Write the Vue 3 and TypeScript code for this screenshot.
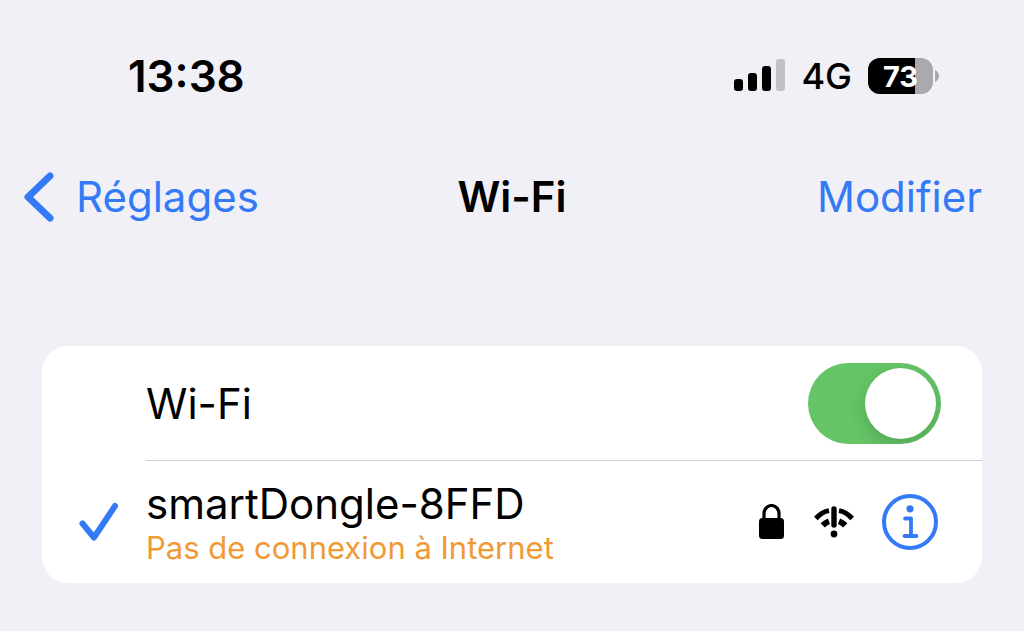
<script setup lang="ts">
import { ref } from 'vue'

interface Network {
  name: string
  status: string
}

const wifiOn = ref(true)
const batteryLevel = 73
const network: Network = {
  name: 'smartDongle-8FFD',
  status: 'Pas de connexion à Internet',
}
</script>

<template>
  <div class="screen">
    <header class="status-bar">
      <time class="clock">13:38</time>
      <div class="indicators">
        <svg class="signal" viewBox="0 0 51 34" aria-hidden="true">
          <rect x="0" y="20" width="9" height="12" rx="3" />
          <rect x="14" y="14" width="9" height="18" rx="3" />
          <rect x="28" y="7" width="9" height="25" rx="3" />
          <rect x="42" y="0" width="9" height="32" rx="3" fill="#c2c2c5" />
        </svg>
        <span class="carrier">4G</span>
        <div class="battery">
          <div class="battery-body">
            <div class="battery-fill" :style="{ width: batteryLevel + '%' }"></div>
            <span class="battery-text">{{ batteryLevel }}</span>
          </div>
          <svg class="battery-nub" viewBox="0 0 4 12" aria-hidden="true">
            <path d="M0 0C2.600 1.200 4 3.400 4 6S2.600 10.800 0 12Z" fill="#a9a9ae" />
          </svg>
        </div>
      </div>
    </header>

    <nav class="nav">
      <a class="back" href="#">
        <svg class="chevron" viewBox="0 0 30 50" aria-hidden="true">
          <path d="M26 4L4 25L26 46" />
        </svg>
        <span>Réglages</span>
      </a>
      <h1 class="title">Wi-Fi</h1>
      <button class="edit" type="button">Modifier</button>
    </nav>

    <main class="card">
      <div class="row row-toggle">
        <label class="row-label" for="wifi">Wi-Fi</label>
        <input id="wifi" v-model="wifiOn" class="switch" type="checkbox" role="switch" />
      </div>
      <div class="row row-network">
        <svg class="check" viewBox="0 0 40 40" aria-hidden="true">
          <path d="M3.500 21.500L15 35.500L36 4" />
        </svg>
        <div class="network">
          <span class="network-name">{{ network.name }}</span>
          <span class="network-status">{{ network.status }}</span>
        </div>
        <svg class="lock" viewBox="0 0 25 36" aria-hidden="true">
          <rect x="0" y="14" width="25" height="21" rx="3.500" />
          <path d="M5 16V9.500a7.500 8 0 0 1 15 0V16" fill="none" stroke="#000" stroke-width="3.200" />
        </svg>
        <svg class="wifi" viewBox="0 0 40 32" aria-hidden="true">
          <g fill="none" stroke="#000" stroke-width="5">
            <path d="M1.800 12.500Q8 5.800 15 4.600" />
            <path d="M38.200 12.500Q32 5.800 25 4.600" />
            <path d="M8.700 19.300Q11.500 16.500 15 15.200" stroke-width="6" />
            <path d="M31.300 19.300Q28.500 16.500 25 15.200" stroke-width="6" />
            <path d="M20 3V19" stroke-width="5.400" stroke-linecap="round" />
          </g>
          <circle cx="20" cy="28" r="3.400" />
        </svg>
        <button class="info" type="button" aria-label="Informations">
          <svg viewBox="0 0 56 56" aria-hidden="true">
            <circle cx="28" cy="28" r="26" fill="none" stroke="#347af6" stroke-width="4" />
            <circle cx="28" cy="14.800" r="3.600" fill="#347af6" />
            <path d="M23 24.500H29V41.500M22.500 42H34.500" fill="none" stroke="#347af6" stroke-width="3.800" stroke-linecap="round" stroke-linejoin="round" />
          </svg>
        </button>
      </div>
    </main>
  </div>
</template>

<style>
body {
  background: #f1f0f6;
}
</style>

<style scoped>
.screen {
  box-sizing: border-box;
  min-height: 100vh;
  padding: 48px 42px;
  background: #f1f0f6;
  color: #000;
  font-family: Inter, "Liberation Sans", sans-serif;
}

svg {
  display: block;
  flex: none;
}

.status-bar {
  display: flex;
  align-items: center;
  justify-content: space-between;
  height: 56px;
  padding: 0 43px 0 86px;
}

.clock {
  font-size: 44px;
  font-weight: 600;
}

.indicators {
  display: flex;
  align-items: center;
}

.signal {
  width: 51px;
  height: 34px;
}

.carrier {
  margin: 0 16px;
  font-size: 36px;
  font-weight: 500;
}

.battery {
  display: flex;
  align-items: center;
  gap: 2px;
}

.battery-body {
  position: relative;
  display: flex;
  align-items: center;
  justify-content: center;
  width: 65px;
  height: 36px;
  overflow: hidden;
  border-radius: 12px;
  background: #a9a9ae;
}

.battery-fill {
  position: absolute;
  inset: 0 auto 0 0;
  background: #000;
}

.battery-text {
  position: relative;
  color: #fff;
  font-size: 29px;
  font-weight: 700;
}

.battery-nub {
  width: 4px;
  height: 12px;
}

.nav {
  display: grid;
  grid-template-columns: 1fr auto 1fr;
  align-items: center;
  height: 56px;
  margin: 65px -18px 121px;
  font-size: 42px;
  line-height: 56px;
}

.back {
  display: flex;
  align-items: center;
  gap: 22px;
  color: #347af6;
  text-decoration: none;
}

.chevron {
  width: 30px;
  height: 50px;
}

.chevron path,
.check path {
  fill: none;
  stroke: #347af6;
  stroke-width: 7;
  stroke-linecap: round;
  stroke-linejoin: round;
}

.check path {
  stroke-width: 6;
}

.title {
  margin: 0;
  font-size: 42px;
  font-weight: 600;
}

.edit {
  justify-self: end;
  padding: 0 18px 0 0;
  border: 0;
  background: none;
  color: #347af6;
  font: inherit;
}

.card {
  overflow: hidden;
  border-radius: 26px;
  background: #fff;
}

.row {
  display: flex;
  align-items: center;
}

.row-toggle {
  justify-content: space-between;
  height: 114px;
  margin-left: 104px;
  padding-right: 41px;
  border-bottom: 1px solid #d0d0d2;
}

.row-label {
  font-size: 42px;
}

.switch {
  display: flex;
  align-items: center;
  box-sizing: border-box;
  width: 133px;
  height: 81px;
  margin: 0;
  padding: 5px;
  overflow: hidden;
  border-radius: 41px;
  background: #d9d9dd;
  appearance: none;
}

.switch::before {
  width: 71px;
  height: 71px;
  border-radius: 50%;
  background: #fff;
  box-shadow: 0 6px 16px rgba(0, 0, 0, 0.16);
  content: "";
}

.switch:checked {
  justify-content: flex-end;
  background: #65c466;
}

.row-network {
  height: 122px;
  padding: 0 44px 0 37px;
}

.check {
  width: 40px;
  height: 40px;
}

.network {
  display: flex;
  flex: 1;
  flex-direction: column;
  padding-top: 4px;
  margin-left: 27px;
}

.network-name {
  font-size: 42px;
  line-height: 48px;
}

.network-status {
  color: #f09a37;
  font-size: 31px;
  line-height: 40px;
}

.lock {
  width: 25px;
  height: 36px;
}

.wifi {
  width: 40px;
  height: 32px;
  margin: 0 28px 0 30px;
}

.info {
  padding: 0;
  border: 0;
  background: none;
}

.info svg {
  width: 56px;
  height: 56px;
}
</style>
